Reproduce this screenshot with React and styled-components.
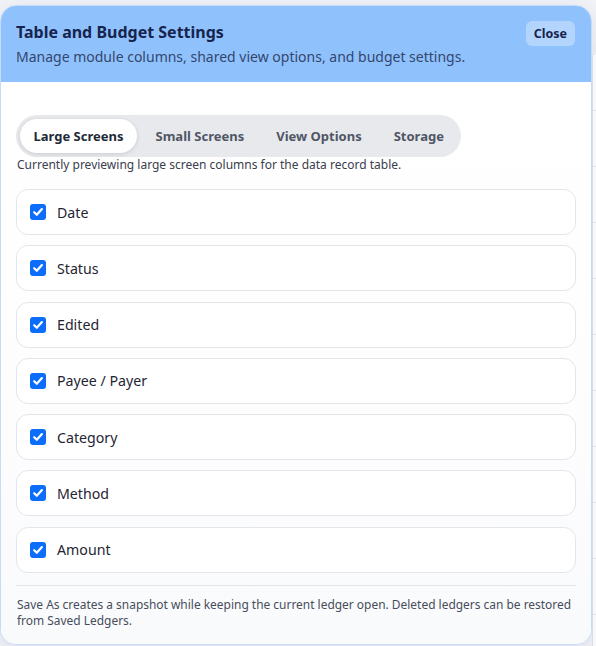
import React, { useState } from "react";
import styled, { createGlobalStyle } from "styled-components";

const Global = createGlobalStyle`
  html, body { margin: 0; padding: 0; }
  body {
    background: #f3f4f8;
    font-family: "Noto Sans", "Open Sans", sans-serif;
    width: 596px;
    height: 646px;
    overflow: hidden;
  }
`;

const Stage = styled.div`
  display: flex;
  align-items: flex-start;
  height: 646px;
  padding-top: 5px;
  box-sizing: border-box;
`;

const Modal = styled.div`
  margin-left: 0px;
  width: 592px;
  height: 640px;
  box-sizing: border-box;
  border: 1px solid #c6dbf8;
  border-radius: 16px;
  background: #ffffff;
  overflow: hidden;
  display: flex;
  flex-direction: column;
  box-shadow: 0 6px 24px rgba(30, 50, 90, 0.12);
`;

const PageEdge = styled.div`
  flex: 1;
  margin-top: 50px;
  align-self: stretch;
  border-left: 1px solid #d6dcec;
  background: repeating-linear-gradient(
    to bottom,
    #f7f8fb 0px,
    #f7f8fb 55px,
    #dfe3ec 55px,
    #dfe3ec 56px
  );
`;

const Header = styled.div`
  background: #8fc2fd;
  padding: 14px 16px 15px 15px;
  display: flex;
  align-items: flex-start;
  justify-content: space-between;
`;

const HeaderText = styled.div`
  display: flex;
  flex-direction: column;
  gap: 3px;
`;

const Title = styled.h2`
  margin: 0;
  font-size: 16px;
  line-height: 24px;
  font-weight: 700;
  color: #17244d;
`;

const Subtitle = styled.p`
  margin: 0;
  font-size: 14px;
  line-height: 20px;
  color: #34466e;
`;

const CloseButton = styled.button`
  margin-top: 1px;
  border: none;
  border-radius: 6px;
  background: rgba(255, 255, 255, 0.32);
  color: #17244d;
  font-family: inherit;
  font-weight: 700;
  font-size: 12.5px;
  height: 25px;
  padding: 0 8px;
  cursor: pointer;
`;

const Body = styled.div`
  flex: 1;
  padding: 33px 15px 0 15px;
  display: flex;
  flex-direction: column;
  background: linear-gradient(180deg, #ffffff 0%, #fdfdfe 60%, #f9fafc 100%);
`;

const TabList = styled.div`
  align-self: flex-start;
  display: flex;
  gap: 5px;
  padding: 4px;
  background: #e8e9ec;
  border-radius: 21px;
`;

const Tab = styled.button`
  height: 34px;
  padding: 0 13.5px;
  border: none;
  border-radius: 17px;
  font-family: inherit;
  font-size: 13px;
  font-weight: 700;
  cursor: pointer;
  background: ${(p) => (p.$active ? "#ffffff" : "transparent")};
  color: ${(p) => (p.$active ? "#222a38" : "#4f5665")};
  box-shadow: ${(p) => (p.$active ? "0 1px 4px rgba(20, 30, 50, 0.14)" : "none")};
`;

const Caption = styled.p`
  margin: 0 0 0 1px;
  font-size: 12px;
  line-height: 16px;
  color: #3a404d;
`;

const List = styled.div`
  margin-top: 16px;
  display: flex;
  flex-direction: column;
  gap: 10.3px;
`;

const Row = styled.label`
  position: relative;
  height: 46px;
  box-sizing: border-box;
  border: 1px solid #e3e5ea;
  border-radius: 12px;
  background: #ffffff;
  display: flex;
  align-items: center;
  gap: 11px;
  padding: 0 13px;
  cursor: pointer;
`;

const HiddenInput = styled.input`
  position: absolute;
  opacity: 0;
  width: 1px;
  height: 1px;
  margin: 0;
`;

const Box = styled.span`
  width: 16px;
  height: 16px;
  border-radius: 3px;
  box-sizing: border-box;
  display: flex;
  align-items: center;
  justify-content: center;
  background: ${(p) => (p.$on ? "#0b6dfa" : "#ffffff")};
  border: ${(p) => (p.$on ? "none" : "1.5px solid #767676")};
`;

const RowLabel = styled.span`
  font-size: 14.2px;
  color: #1f2533;
`;

const Divider = styled.hr`
  margin: 12px 0 0 0;
  border: none;
  border-top: 1px solid #e3e5ea;
`;

const Footer = styled.p`
  margin: 11px 0 0 1px;
  font-size: 11.95px;
  line-height: 16px;
  color: #474d5b;
`;

const tabs = ["Large Screens", "Small Screens", "View Options", "Storage"];
const columns = ["Date", "Status", "Edited", "Payee / Payer", "Category", "Method", "Amount"];

function CheckMark() {
  return (
    <svg width="12" height="12" viewBox="0 0 12 12" aria-hidden="true">
      <path d="M2.2 6.2 L4.8 8.8 L9.9 3.1" fill="none" stroke="#fff" strokeWidth="2.2" strokeLinecap="round" strokeLinejoin="round" />
    </svg>
  );
}

export default function App() {
  const [active, setActive] = useState(0);
  const [checked, setChecked] = useState(columns.map(() => true));
  return (
    <>
      <Global />
      <Stage>
        <Modal>
          <Header>
            <HeaderText>
              <Title>Table and Budget Settings</Title>
              <Subtitle>Manage module columns, shared view options, and budget settings.</Subtitle>
            </HeaderText>
            <CloseButton>Close</CloseButton>
          </Header>
          <Body>
            <TabList>
              {tabs.map((t, i) => (
                <Tab key={t} $active={i === active} onClick={() => setActive(i)}>
                  {t}
                </Tab>
              ))}
            </TabList>
            <Caption>Currently previewing large screen columns for the data record table.</Caption>
            <List>
              {columns.map((c, i) => (
                <Row key={c}>
                  <HiddenInput
                    type="checkbox"
                    checked={checked[i]}
                    onChange={() => setChecked((s) => s.map((v, j) => (j === i ? !v : v)))}
                  />
                  <Box $on={checked[i]}>{checked[i] && <CheckMark />}</Box>
                  <RowLabel>{c}</RowLabel>
                </Row>
              ))}
            </List>
            <Divider />
            <Footer>
              Save As creates a snapshot while keeping the current ledger open. Deleted ledgers can be restored
              from Saved Ledgers.
            </Footer>
          </Body>
        </Modal>
        <PageEdge />
      </Stage>
    </>
  );
}
